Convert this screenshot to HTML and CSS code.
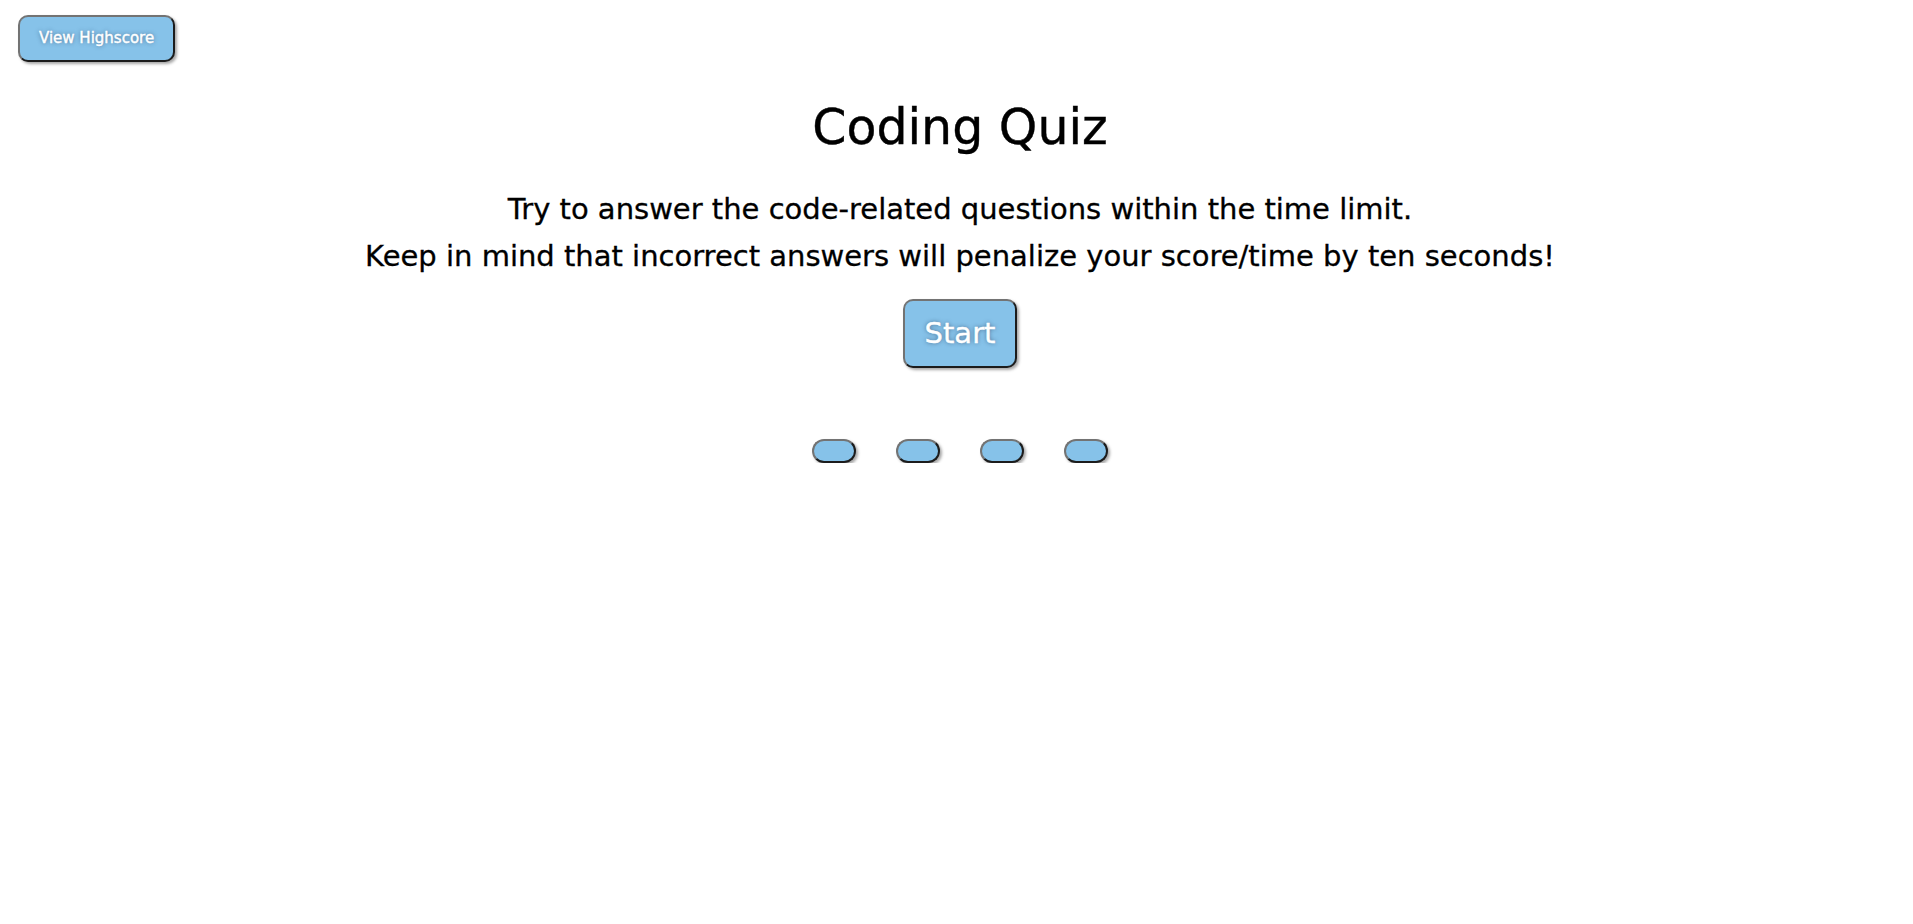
FILE: index.html
```html
<!DOCTYPE html>
<html lang="en">
<head>
<meta charset="utf-8">
<title>Coding Quiz</title>
<link rel="stylesheet" href="styles.css">
</head>
<body>
<header class="top-bar">
  <button class="btn btn-highscore">View Highscore</button>
</header>
<main class="quiz">
  <h1 class="title">Coding Quiz</h1>
  <p class="intro">Try to answer the code-related questions within the time limit.<br>Keep in mind that incorrect answers will penalize your score/time by ten seconds!</p>
  <button class="btn btn-start">Start</button>
  <div class="answers">
    <button class="btn btn-answer"></button>
    <button class="btn btn-answer"></button>
    <button class="btn btn-answer"></button>
    <button class="btn btn-answer"></button>
  </div>
</main>
</body>
</html>
```

FILE: styles.css
```css
html, body {
  margin: 0;
  padding: 0;
  background: #ffffff;
}

body {
  font-family: "DejaVu Sans", "Noto Sans", sans-serif;
  color: #000000;
}

.top-bar {
  display: flex;
  padding: 15px 18px 0;
}

.btn {
  font-family: "DejaVu Sans", "Noto Sans", sans-serif;
  background: #86c2e9;
  color: #ffffff;
  border: 2px solid;
  border-color: #737373 #1c1c1c #1c1c1c #737373;
  box-shadow: 2px 2px 3px rgba(0, 0, 0, 0.35);
  text-shadow: 0 0 4px rgba(30, 50, 80, 0.6);
  -webkit-text-stroke: 0.4px #ffffff;
  cursor: pointer;
  margin: 0;
}

.btn-highscore {
  font-size: 15px;
  line-height: 17px;
  padding: 13px 19px;
  border-radius: 10px;
}

.quiz {
  display: flex;
  flex-direction: column;
  align-items: center;
  padding-left: 7px;
}

.title {
  font-size: 49px;
  font-weight: normal;
  line-height: 55px;
  margin: 38px 0 0;
  -webkit-text-stroke: 0.4px #000000;
}

.intro {
  font-size: 29px;
  line-height: 47px;
  text-align: center;
  margin: 31px 0 0;
  -webkit-text-stroke: 0.3px #000000;
}

.btn-start {
  font-size: 29px;
  line-height: 35px;
  padding: 15px 20px;
  border-radius: 10px;
  margin-top: 19px;
}

.answers {
  display: flex;
  gap: 40px;
  margin-top: 71px;
}

.btn-answer {
  width: 44px;
  height: 24px;
  padding: 0;
  border-radius: 12px;
}
```
